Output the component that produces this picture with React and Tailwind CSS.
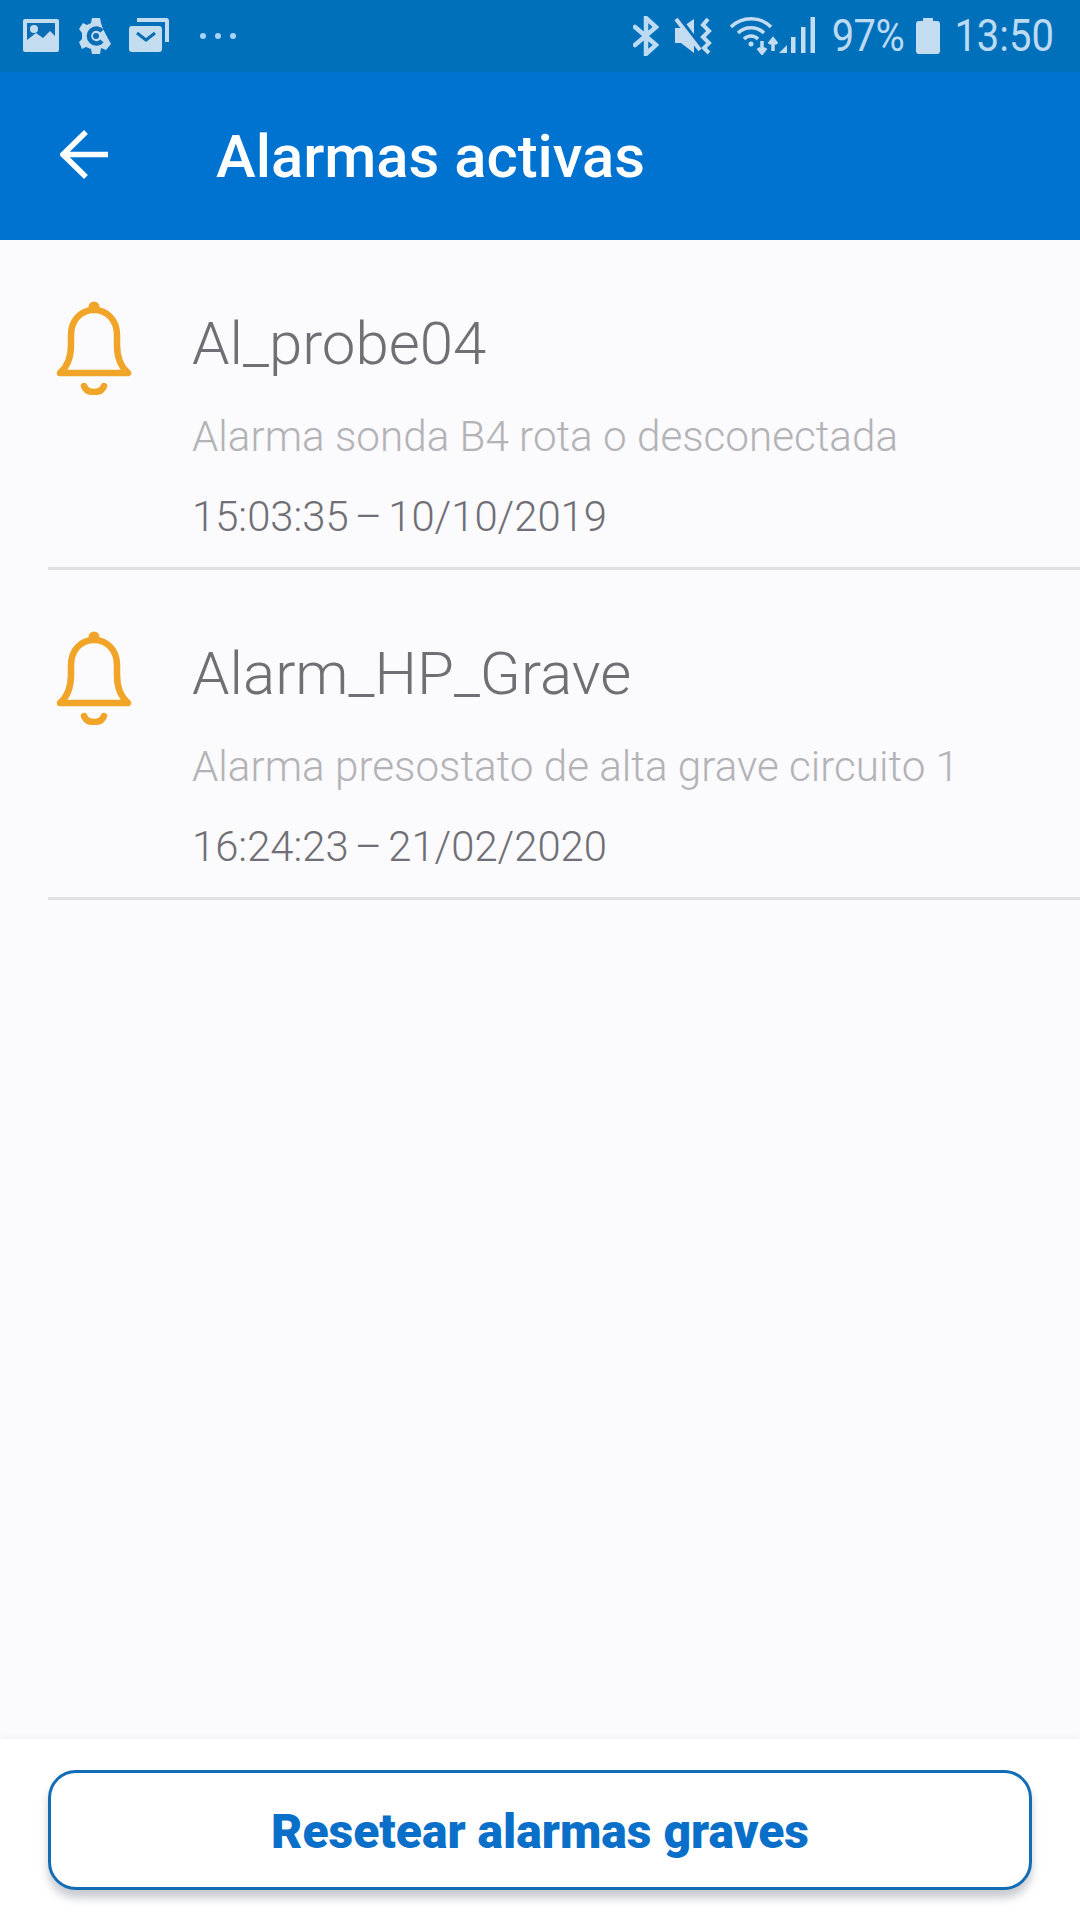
const ALARMS = [
  { name: 'Al_probe04', desc: 'Alarma sonda B4 rota o desconectada', time: '15:03:35 – 10/10/2019' },
  { name: 'Alarm_HP_Grave', desc: 'Alarma presostato de alta grave circuito 1', time: '16:24:23 – 21/02/2020' },
]

function Bell() {
  return (
    <svg width="76" height="94" viewBox="0 0 76 94" fill="none" stroke="#f0a428" strokeWidth="6.5" strokeLinecap="round" strokeLinejoin="round">
      <path d="M4 72 C12 65 15 56 15 44 L15 34 C15 19 25 9 38 9 C51 9 61 19 61 34 L61 44 C61 56 64 65 72 72 Z" />
      <circle cx="38" cy="6" r="3.5" fill="#f0a428" strokeWidth="4" />
      <path d="M28 85 C31 93 45 93 48 85" />
    </svg>
  )
}

function StatusBar() {
  return (
    <div className="h-[72px] bg-[#0070bb] flex items-center justify-between pl-[23px] pr-[26px] text-[#bcdaf2]">
      <div className="flex items-center">
        {/* gallery */}
        <svg width="36" height="36" viewBox="0 0 36 36">
          <rect x="0" y="1" width="36" height="33" rx="2" fill="#c3dcf0" />
          <rect x="4" y="5" width="28" height="20" fill="#0a6db5" />
          <circle cx="11" cy="11" r="4" fill="#c3dcf0" />
          <path d="M4 22 L13 15 L20 20 L27 13 L32 18 V26 H4 Z" fill="#c3dcf0" />
        </svg>
        {/* settings notification */}
        <svg className="ml-[20px]" width="32" height="38" viewBox="0 0 32 38">
          <path d="M13 1 H21 L22 6 L24 12 L32 27 L27 33 L22 31 L21 37 H13 L12 32 L7 30 L3 32 L0 25 L3 22 V16 L0 12 L4 6 L8 8 L12 6 Z" fill="#c3dcf0" />
          <path d="M23 14 A7.5 7.5 0 1 0 23 24" fill="none" stroke="#0a6db5" strokeWidth="4.5" />
          <circle cx="17" cy="19" r="3" fill="#0a6db5" />
        </svg>
        {/* mail stack */}
        <svg className="ml-[18px]" width="40" height="36" viewBox="0 0 40 36">
          <path d="M8 0 H37 Q40 0 40 3 V24 H36 V4 H8 Z" fill="#c3dcf0" />
          <rect x="0" y="8" width="33" height="26" rx="3" fill="#c3dcf0" />
          <path d="M8 15 L17 22 L26 15" fill="none" stroke="#0a6db5" strokeWidth="3" />
        </svg>
        <div className="ml-[31px] flex gap-[9px]">
          <span className="w-[6px] h-[6px] rounded-full bg-[#a8d4f5]" />
          <span className="w-[6px] h-[6px] rounded-full bg-[#a8d4f5]" />
          <span className="w-[6px] h-[6px] rounded-full bg-[#a8d4f5]" />
        </div>
      </div>
      <div className="flex items-center font-['Roboto',sans-serif] text-[40px] leading-none">
        {/* bluetooth */}
        <svg width="26" height="40" viewBox="0 0 26 40" fill="none" stroke="#bcdaf2" strokeWidth="4.5" strokeLinecap="round">
          <path d="M2 11 L23 29 L13 38 V2 L23 11 L2 29" />
        </svg>
        {/* mute + vibrate */}
        <svg className="ml-[15px]" width="40" height="38" viewBox="0 0 40 38">
          <path d="M1 11 H7 L20 2 V36 L7 26 H1 Z" fill="#c3dcf0" />
          <path d="M6 2 L30 34" stroke="#0a6db5" strokeWidth="4" />
          <path d="M2 2 L26 33" stroke="#c3dcf0" strokeWidth="4" />
          <path d="M34 2 L29 8 L35 14 L29 20 L35 26 L30 31 L35 36" fill="none" stroke="#c3dcf0" strokeWidth="4" />
        </svg>
        {/* wifi + arrows */}
        <svg className="ml-[16px]" width="48" height="38" viewBox="0 0 48 38" fill="none" stroke="#c3dcf0" strokeWidth="3.5">
          <path d="M1 10 C12 -1 30 -1 41 10" />
          <path d="M8 16 C15 9 27 9 34 16" />
          <path d="M14 22 C18 18 24 18 28 22" />
          <circle cx="21" cy="27" r="2.5" fill="#c3dcf0" stroke="none" />
          <path d="M32 24 V36 M28 31 L32 36 L36 31" />
          <path d="M43 34 V22 M39 27 L43 22 L47 27" />
        </svg>
        {/* signal */}
        <svg className="ml-[1px]" width="36" height="38" viewBox="0 0 36 38" fill="#c3dcf0">
          <path d="M0 36 L8 28 V36 Z" />
          <rect x="12" y="20" width="4.5" height="16" />
          <rect x="22" y="10" width="4.5" height="26" />
          <rect x="31.5" y="0" width="4.5" height="36" />
        </svg>
        <span className="ml-[17px] inline-block scale-y-[1.12] tracking-[-0.5px]">97%</span>
        {/* battery */}
        <svg className="ml-[12px]" width="24" height="36" viewBox="0 0 24 36" fill="#c3dcf0">
          <path d="M7 0 H17 V3 H21 Q24 3 24 6 V33 Q24 36 21 36 H3 Q0 36 0 33 V6 Q0 3 3 3 H7 Z" />
        </svg>
        <span className="ml-[14px] inline-block scale-y-[1.12]">13:50</span>
      </div>
    </div>
  )
}

export default function App() {
  return (
    <div className="w-[1080px] h-[1920px] flex flex-col bg-[#fbfafc] font-['Roboto',sans-serif] overflow-hidden">
      <StatusBar />

      {/* Toolbar */}
      <div className="h-[168px] bg-[#0073d1] flex items-center">
        <svg className="ml-[60px] -mt-[3px]" width="49" height="49" viewBox="0 0 49 49" fill="none" stroke="#fff" strokeWidth="5.5">
          <path d="M48 24.5 H4 M26 2 L3 24.5 L26 47" />
        </svg>
        <h1 className="ml-[107px] mt-[3px] text-[59.8px] leading-none font-medium text-white">Alarmas activas</h1>
      </div>

      {/* List */}
      <div className="flex-1">
        {ALARMS.map(a => (
          <div key={a.name} className="h-[330px] ml-[48px] border-b-[3px] border-[#e0e0e3] flex">
            <div className="w-[144px] pt-[61px] pl-[8px]">
              <Bell />
            </div>
            <div className="pt-[68px]">
              <div className="text-[60px] leading-[72px] font-light text-[#6f6f75]">{a.name}</div>
              <div className="mt-[33px] text-[42.2px] leading-[48px] font-light text-[#b3b3b7]">{a.desc}</div>
              <div className="mt-[32px] text-[41.8px] leading-[48px] font-light text-[#6f6f75] [word-spacing:-4px]">{a.time}</div>
            </div>
          </div>
        ))}
      </div>

      {/* Footer */}
      <div className="h-[181px] bg-white shadow-[0_-2px_6px_rgba(0,0,0,0.04)] px-[48px] pt-[31px]">
        <button className="w-full h-[120px] pt-[3px] rounded-[28px] bg-white border-[3px] border-[#136db5] shadow-[0_8px_8px_rgba(60,70,90,0.28)] text-[48px] font-black text-[#0a6fc8]">
          Resetear alarmas graves
        </button>
      </div>
    </div>
  )
}
